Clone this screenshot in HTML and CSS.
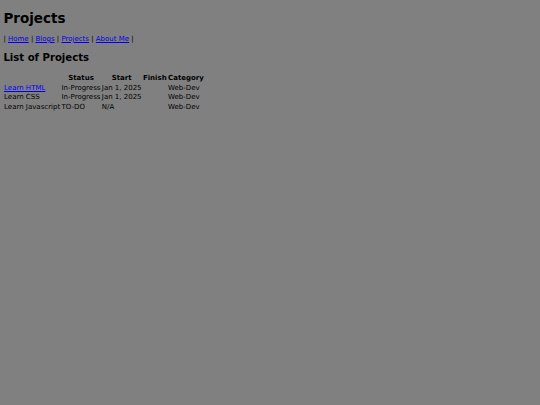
FILE: index.html
```html
<!DOCTYPE html>
<html lang="en">
<head>
<meta charset="utf-8">
<title>Projects</title>
<link rel="stylesheet" href="styles.css">
</head>
<body class="page">
<h1 class="title">Projects</h1>
<p class="nav">| <a href="#">Home</a> | <a href="#">Blogs</a> | <a href="#">Projects</a> | <a href="#">About Me</a> |</p>
<h2 class="subtitle">List of Projects</h2>
<table class="projects">
<thead>
<tr><th></th><th>Status</th><th>Start</th><th>Finish</th><th>Category</th></tr>
</thead>
<tbody>
<tr><td><a href="#">Learn HTML</a></td><td>In-Progress</td><td>Jan 1, 2025</td><td></td><td>Web-Dev</td></tr>
<tr><td>Learn CSS</td><td>In-Progress</td><td>Jan 1, 2025</td><td></td><td>Web-Dev</td></tr>
<tr><td>Learn Javascript</td><td>TO-DO</td><td>N/A</td><td></td><td>Web-Dev</td></tr>
</tbody>
</table>
</body>
</html>
```
FILE: styles.css
```css
html {
  background: #808080;
}
.page {
  margin: 3.4px;
  font-family: "DejaVu Sans", Verdana, sans-serif;
  font-size: 7px;
  color: #000;
  background: #808080;
}
.title {
  font-size: 13.5px;
  font-weight: bold;
  margin: 6.5px 0 9px;
}
.nav {
  margin: 7px 0;
}
.nav a,
.projects a {
  color: #0000ee;
  text-decoration: underline;
}
.subtitle {
  font-size: 10.125px;
  font-weight: bold;
  margin: 9.4px 0 9.5px;
}
.projects {
  border-spacing: 0 1px;
  font-size: 7px;
}
.projects th,
.projects td {
  padding: 0 0.7px;
  line-height: 8.75px;
}
.projects th {
  font-weight: bold;
  text-align: center;
}
.projects td {
  text-align: left;
}
```
